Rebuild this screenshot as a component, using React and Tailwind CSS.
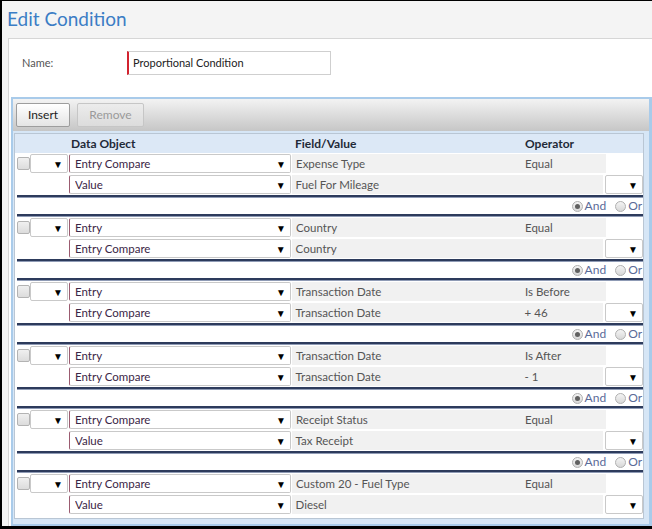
import React from "react";

const groups = [
  { a: "Entry Compare", f1: "Expense Type", op1: "Equal", b: "Value", f2: "Fuel For Mileage", op2: "" },
  { a: "Entry", f1: "Country", op1: "Equal", b: "Entry Compare", f2: "Country", op2: "" },
  { a: "Entry", f1: "Transaction Date", op1: "Is Before", b: "Entry Compare", f2: "Transaction Date", op2: "+ 46" },
  { a: "Entry", f1: "Transaction Date", op1: "Is After", b: "Entry Compare", f2: "Transaction Date", op2: "- 1" },
  { a: "Entry Compare", f1: "Receipt Status", op1: "Equal", b: "Value", f2: "Tax Receipt", op2: "" },
  { a: "Entry Compare", f1: "Custom 20 - Fuel Type", op1: "Equal", b: "Value", f2: "Diesel", op2: "" },
];

function Arrow() {
  return <span className="text-[10px] leading-none text-black">▼</span>;
}

function BigSelect({ text }) {
  return (
    <div className="flex items-center h-[19px] w-[222px] bg-white border border-[#c9c9c9] border-l-[#9b5b70] rounded-[2px] pl-[5px] pr-[4px]">
      <span className="flex-1 truncate text-[11.5px] text-[#3b2646]">{text}</span>
      <Arrow />
    </div>
  );
}

function SmallSelect() {
  return (
    <div className="flex items-center justify-end h-[19px] w-[38px] bg-white border border-[#c9c9c9] rounded-[2px] pr-[4px]">
      <Arrow />
    </div>
  );
}

function Checkbox() {
  return (
    <div className="w-[13px] h-[13px] border border-[#b3b3b3] rounded-[2px] bg-gradient-to-b from-[#f0f0f0] to-[#dcdcdc]" />
  );
}

function Radio({ checked }) {
  return (
    <div className="w-[11px] h-[11px] rounded-full border border-[#b0b0b0] bg-gradient-to-b from-[#f4f4f4] to-[#d8d8d8] flex items-center justify-center">
      {checked && <div className="w-[5px] h-[5px] rounded-full bg-[#606060]" />}
    </div>
  );
}

function Separator() {
  return (
    <div className="ml-[2px] h-[3px] flex flex-col">
      <div className="h-[2px] bg-[#2d3b5c]" />
      <div className="h-[1px] bg-[#8f9bb5]" />
    </div>
  );
}

function Group({ g, last }) {
  return (
    <div className="flex flex-col">
      <div className="flex items-center h-[21px] pl-[2px]">
        <Checkbox />
        <SmallSelect />
        <div className="ml-[1px]">
          <BigSelect text={g.a} />
        </div>
        <div className="ml-[1px] flex items-center h-[19px] w-[314px] bg-[#f1f1f1] text-[11.5px] text-[#555555]">
          <span className="w-[233px] pl-[4px] truncate">{g.f1}</span>
          <span>{g.op1}</span>
        </div>
      </div>
      <div className="flex items-center h-[21px] pl-[54px]">
        <BigSelect text={g.b} />
        <div className="ml-[1px] flex items-center h-[19px] w-[312px] bg-[#f1f1f1] text-[11.5px] text-[#555555]">
          <span className="w-[233px] pl-[4px] truncate">{g.f2}</span>
          <span>{g.op2}</span>
        </div>
        <div className="ml-[2px]">
          <SmallSelect />
        </div>
      </div>
      {!last && (
        <>
          <Separator />
          <div className="h-[16px] flex items-center justify-end gap-[2px] pr-[1px] text-[12px] text-[#5a6a98]">
            <Radio checked />
            <span className="mr-[7px]">And</span>
            <Radio />
            <span>Or</span>
          </div>
          <Separator />
        </>
      )}
    </div>
  );
}

export default function App() {
  return (
    <div
      className="w-[652px] h-[529px] bg-black pl-[2px] pt-[1px] pb-[3px] overflow-hidden"
      style={{ fontFamily: "Lato, 'Noto Sans', sans-serif" }}
    >
      <div className="h-full bg-[#f4f4f4] flex flex-col">
        <div className="h-[37px] pl-[5px] pt-[7px] text-[19px] leading-[22px] text-[#3b7dc5]">Edit Condition</div>
        <div className="flex-1 ml-[6px] border-l border-t border-[#d6d6d6] bg-white flex flex-col">
          <div className="h-[58px] flex items-start pt-[12px] pl-[13px]">
            <span className="w-[105px] h-[24px] flex items-center text-[11px] text-[#555555]">Name:</span>
            <div className="w-[204px] h-[24px] border border-[#cfcfcf] border-l-2 border-l-[#d2232f] flex items-center pl-[4px] text-[11px] text-[#222222]">
              Proportional Condition
            </div>
          </div>
          <div className="flex-1 ml-[2px] border-2 border-r-[3px] border-[#a9cbea] bg-[#d6e6f6] flex flex-col">
            <div className="h-[32px] bg-gradient-to-b from-[#f3f3f3] to-[#c6c6c6] flex items-center gap-[7px] pl-[3px]">
              <div className="w-[54px] h-[24px] border border-[#9d9d9d] rounded-[2px] bg-gradient-to-b from-[#ffffff] to-[#e4e4e4] flex items-center justify-center text-[12px] text-[#222222]">
                Insert
              </div>
              <div className="w-[67px] h-[24px] border border-[#c6c6c6] rounded-[2px] bg-gradient-to-b from-[#ececec] to-[#dcdcdc] flex items-center justify-center text-[12px] text-[#9a9a9a]">
                Remove
              </div>
            </div>
            <div className="flex-1 pt-[2px] pl-[1px] pr-[5px] pb-[4px] flex flex-col">
              <div className="bg-white border border-[#b9c6d4] pb-[3px] flex flex-col">
                <div className="h-[19px] bg-[#dce8f6] flex items-center text-[12px] font-bold text-[#1f2a38]">
                  <span className="w-[280px] pl-[56px]">Data Object</span>
                  <span className="w-[230px]">Field/Value</span>
                  <span>Operator</span>
                </div>
                {groups.map((g, i) => (
                  <Group key={i} g={g} last={i === groups.length - 1} />
                ))}
              </div>
            </div>
          </div>
        </div>
      </div>
    </div>
  );
}
